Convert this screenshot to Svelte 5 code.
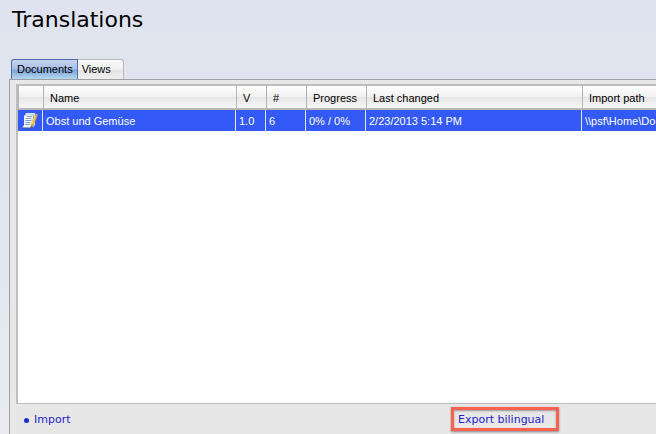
<script>
  let active = $state('Documents');
  let selected = $state(0);
  const tabs = ['Documents', 'Views'];
  const headers = ['', 'Name', 'V', '#', 'Progress', 'Last changed', 'Import path'];
  const rows = [
    ['Obst und Gemüse', '1.0', '6', '0% / 0%', '2/23/2013 5:14 PM', '\\\\psf\\Home\\Do']
  ];
</script>

<main>
  <h1>Translations</h1>
  <div class="tabs" role="tablist">
    {#each tabs as tab}
      <button
        role="tab"
        class:active={active === tab}
        aria-selected={active === tab}
        onclick={() => (active = tab)}>{tab}</button>
    {/each}
  </div>
  <section>
    <div class="list">
      <table>
        <colgroup>
          <col class="icon" /><col class="name" /><col class="version" /><col class="count" />
          <col class="progress" /><col class="changed" /><col />
        </colgroup>
        <thead>
          <tr>
            {#each headers as header}<th scope="col">{header}</th>{/each}
          </tr>
        </thead>
        <tbody>
          {#each rows as row, i}
            <tr class:selected={selected === i} onclick={() => (selected = i)}>
              <td class="symbol">
                <svg width="16" height="16" viewBox="0 0 16 16" aria-hidden="true">
                  <path d="M4 .5h8.500v11l-1 2H3z" fill="#c9def2" stroke="#dcebf8" />
                  <path d="M2 2.500h8.500v10l-1.500 2.500H0l2-3z" fill="#eef6fd" />
                  <path d="M5 3.500h5M3.500 5.500h6M3.500 7.500h6M3.500 9.500h5M3 11.500h5" stroke="#7fa3ca" />
                  <path d="M11.500 2v9" stroke="#8fb0d4" />
                  <path d="M0 15h8.500l3-3" fill="none" stroke="#31508c" />
                  <path d="M13 2l2.500 1-4 9-2.800 2.500.3-3.500z" fill="#e3a52f" />
                  <path d="M13.500 3l-3.700 8.300" stroke="#ffdf7c" />
                  <path d="M13 2l.7-1.500 2.200 1-.5 1.500z" fill="#c9a08a" />
                  <path d="M9 12.800l-.4 1.900 1.500-1.200z" fill="#333" />
                </svg>
              </td>
              {#each row as cell}<td>{cell}</td>{/each}
            </tr>
          {/each}
        </tbody>
      </table>
    </div>
    <nav>
      <ul><li><a href="#import">Import</a></li></ul>
      <a class="export" href="#export">Export bilingual</a>
    </nav>
  </section>
</main>

<style>
  :global(body) {
    margin: 0;
    overflow: hidden;
  }
  main {
    box-sizing: border-box;
    height: 100vh;
    display: flex;
    flex-direction: column;
    padding: 6px 0 0 9px;
    background: linear-gradient(#dfe3ef, #e0e4ef 60px, #e1e4ef 140px, #e9ebf1 434px);
    font: 11px/13px "Liberation Sans", Arial, sans-serif;
    color: #000;
  }
  h1 {
    margin: 0 0 25px 3px;
    font: 22px/28px "DejaVu Sans", Verdana, sans-serif;
  }
  .tabs {
    display: flex;
    padding-left: 2px;
  }
  button {
    height: 20px;
    padding: 0 12px 0 4px;
    border: 1px solid #b9b9bb;
    border-width: 1px 1px 0 0;
    border-radius: 0 3px 0 0;
    background: linear-gradient(#f8f8f8, #f0f0f0 50%, #e3e3e3 51%, #efefef);
    font: inherit;
    color: inherit;
  }
  button.active {
    padding: 0 4px 0 5px;
    border: 1px solid #526cab;
    border-bottom: 0;
    border-radius: 3px 0 0 0;
    background: linear-gradient(#c5d2ee, #a9c0e7 48%, #7ca4d9 52%, #b3d7ee);
  }
  section {
    flex: 1;
    min-height: 0;
    display: flex;
    flex-direction: column;
    padding: 4px 0 0 6px;
    border: 1px solid #a0a0a4;
    border-width: 1px 0 0 1px;
    background: #e7e7e7;
  }
  .list {
    flex: 1;
    min-height: 0;
    overflow: hidden;
    border: 2px solid #bdbdbd;
    border-width: 2px 0 1px 2px;
    background: #fff;
  }
  table {
    width: 100%;
    min-width: 638px;
    table-layout: fixed;
    border-spacing: 0;
  }
  .icon { width: 25px; }
  .name { width: 193px; }
  .version { width: 30px; }
  .count { width: 40px; }
  .progress { width: 60px; }
  .changed { width: 216px; }
  th,
  td {
    box-sizing: border-box;
    overflow: hidden;
    white-space: nowrap;
    text-align: left;
    font-weight: normal;
  }
  th {
    height: 24px;
    padding: 2px 0 0 6px;
    border-left: 1px solid #b4b4b4;
    border-bottom: 2px solid #b9b9b9;
    background: linear-gradient(#fff, #f1f1f1 48%, #e6e6e6 52%, #f7f7f7);
  }
  td {
    height: 21px;
    padding: 2px 0 0 3px;
    border-right: 1px solid #e6e6e6;
  }
  td:last-child {
    border-right: 0;
  }
  .selected {
    background: #335af6;
    color: #fff;
  }
  .symbol {
    padding: 0 0 0 4px;
  }
  svg {
    display: block;
  }
  nav {
    display: grid;
    grid-template-columns: 435px auto;
    justify-content: start;
    align-items: center;
    height: 30px;
    font: 11px/16px "DejaVu Sans", Verdana, sans-serif;
  }
  ul {
    margin: 0;
    padding: 2px 0 0 8px;
    list-style: none;
  }
  li {
    display: flex;
    align-items: center;
    gap: 5px;
  }
  li::before {
    content: "";
    width: 5px;
    height: 5px;
    border-radius: 50%;
    background: #1c2fc8;
  }
  a {
    color: #2424c8;
    text-decoration: none;
  }
  .export {
    padding: 2px 12px 0 4px;
    border: 3px solid #fb6151;
    box-shadow: 0 1px 2px #888, inset 0 1px 2px #999;
  }
</style>
